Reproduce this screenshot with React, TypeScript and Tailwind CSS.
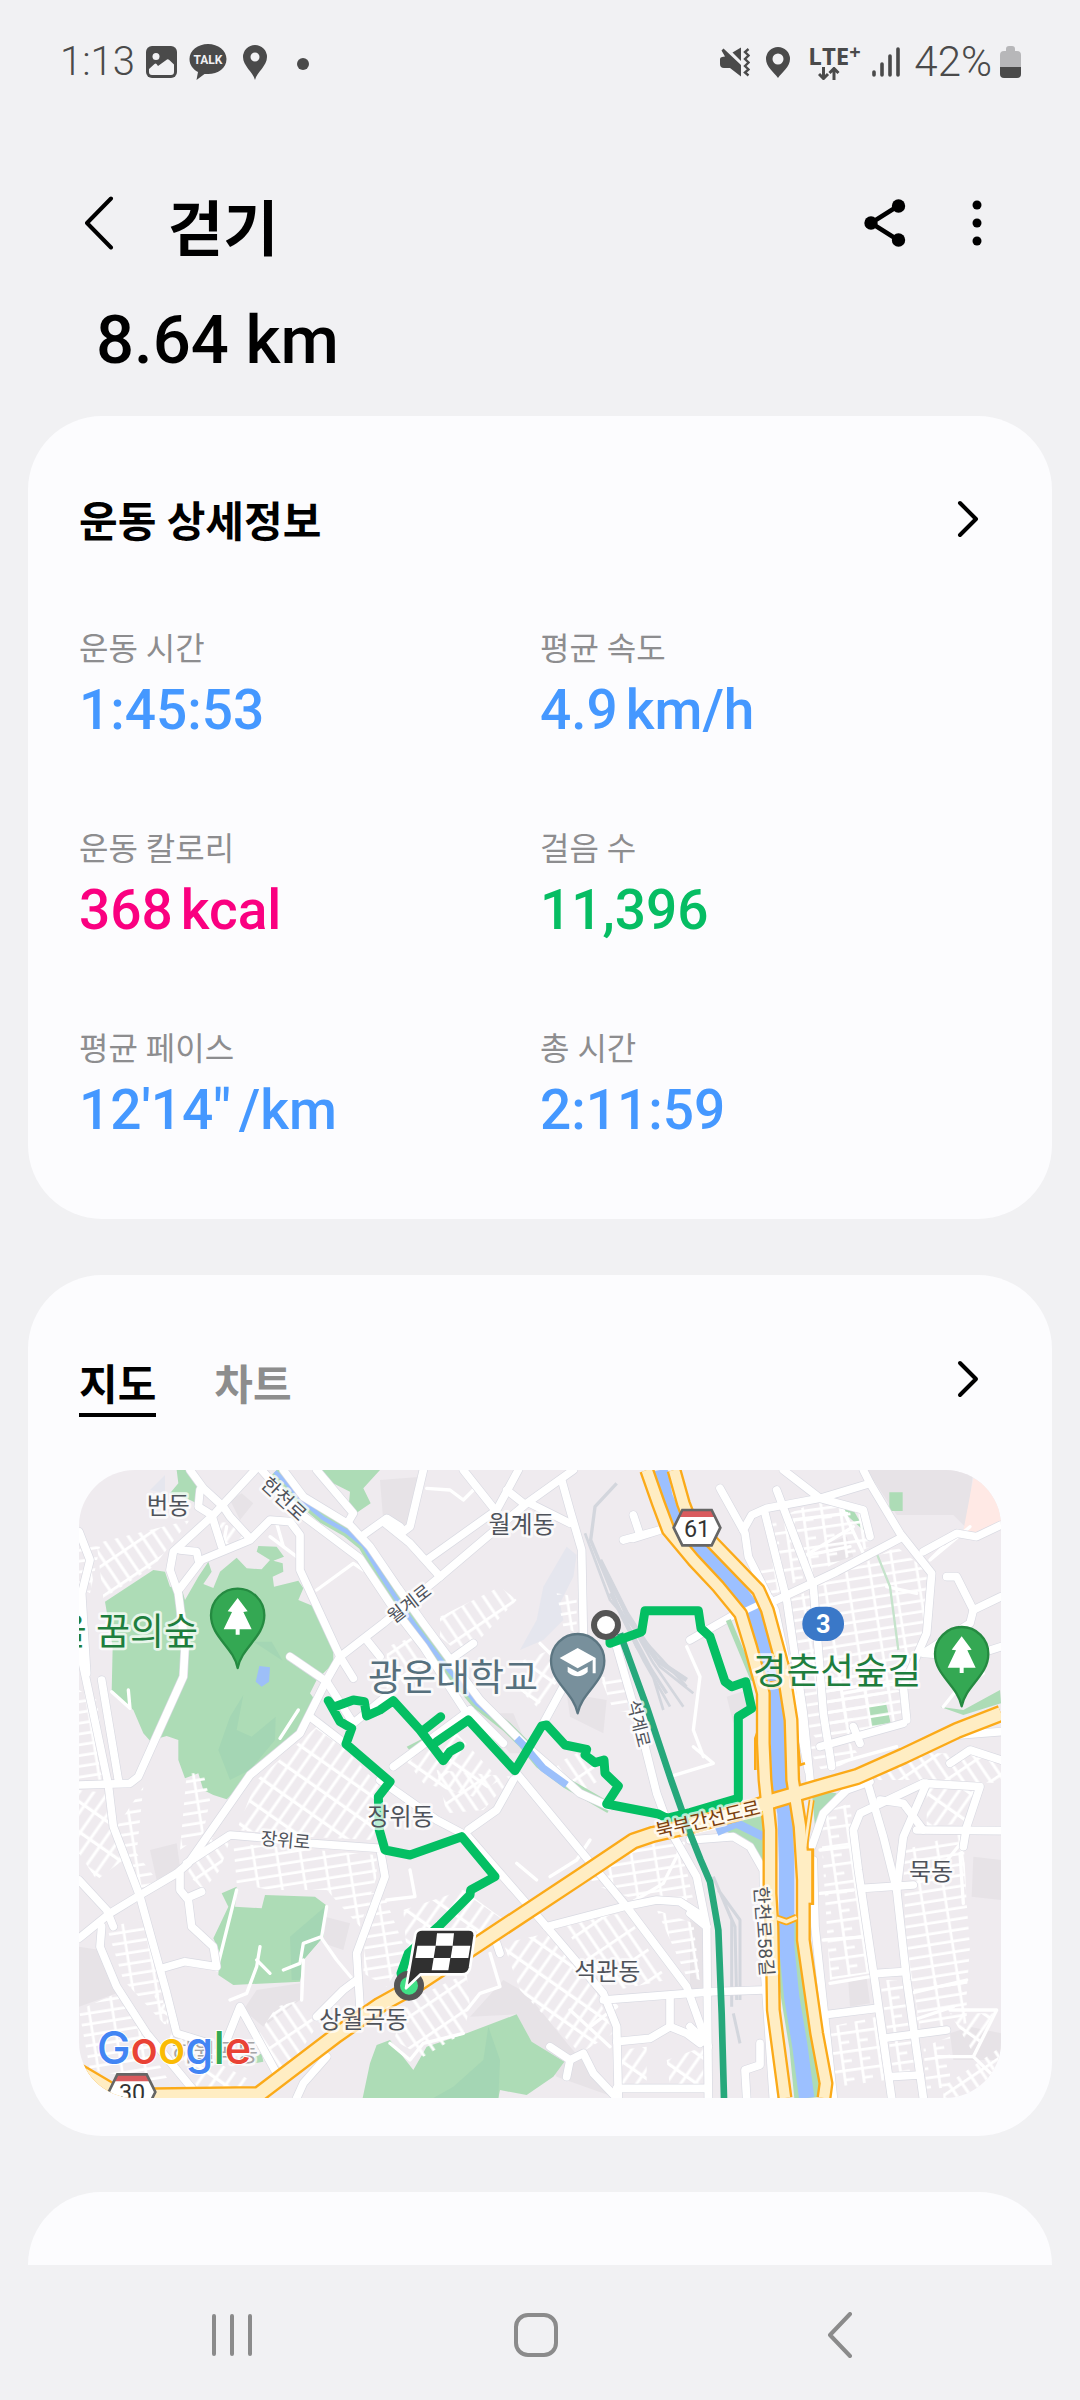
import React, { useState } from "react";

const sans = "font-['Roboto','Noto_Sans_CJK_KR',sans-serif]";

type Metric = { label: string; value: string; unit?: string; tone: string };

const metrics: Metric[] = [
  { label: "운동 시간", value: "1:45:53", tone: "text-[#4598ff]" },
  { label: "평균 속도", value: "4.9", unit: "km/h", tone: "text-[#4598ff]" },
  { label: "운동 칼로리", value: "368", unit: "kcal", tone: "text-[#fa0080]" },
  { label: "걸음 수", value: "11,396", tone: "text-[#06bd63]" },
  { label: "평균 페이스", value: "12'14\"", unit: "/km", tone: "text-[#4598ff]" },
  { label: "총 시간", value: "2:11:59", tone: "text-[#4598ff]" },
];

function StatusBar() {
  return (
    <div className="flex h-[124px] items-center justify-between pl-[60px] pr-[59px] text-[#4a4a4a]">
      <div className="flex items-center">
        <span className="text-[40px] font-light leading-[48px]">1:13</span>
        <svg viewBox="0 0 31 32" className="ml-[11px] h-8 w-[31px]" aria-hidden="true">
          <rect width="31" height="32" rx="6" fill="#4a4a4a" />
          <circle cx="10" cy="10.500" r="3.500" fill="#f1f1f3" />
          <path d="M3 23 L8.500 18 Q9.500 17 10.500 18 L12 20 L21 13.500 Q22 12.800 23 13.800 L28 18.500 V26 Q28 29 25 29 H6 Q3 29 3 26Z" fill="#f1f1f3" />
        </svg>
        <svg viewBox="0 0 38 36" className="ml-3 h-9 w-[38px]" role="img" aria-label="TALK">
          <path d="M19 0 C29 0 37.500 6.500 37.500 15 C37.500 24 29 30 19 30 L15.500 30 L7.500 36 L9 28 C4 25.500 .500 21 .500 15 C.500 6.500 9 0 19 0Z" fill="#4a4a4a" />
          <text x="19" y="20" textAnchor="middle" fontSize="12" fontWeight="700" fill="#f1f1f3">TALK</text>
        </svg>
        <svg viewBox="0 0 24 35" className="ml-4 h-[35px] w-6" aria-hidden="true">
          <path fillRule="evenodd" d="M12 0 A12 12 0 0 1 24 12 C24 21 14 27 12 35 C10 27 0 21 0 12 A12 12 0 0 1 12 0Z M12 7.500 A4.500 4.500 0 1 0 12 16.500 A4.500 4.500 0 1 0 12 7.500Z" fill="#4a4a4a" />
        </svg>
        <span className="ml-[30px] mt-1 size-3 rounded-full bg-[#4a4a4a]" />
      </div>
      <div className="flex items-center">
        <svg viewBox="0 0 30 30" className="h-[30px] w-[30px]" fill="#4a4a4a" aria-hidden="true">
          <path d="M0 12 Q0 10.500 2 10 L5 9.500 L1.500 3.500 L3.500 1.500 L21 18 V29.500 L10 21 H4 Q0 21 0 17Z" />
          <path d="M12.500 5.500 L21 .500 V14Z" />
          <path d="M28.500 2 L25 5 L28.500 8.500 L25 12 L28.500 15.500 L25 19 L28.500 22.500 L25 25.500 L28.500 28.500" fill="none" stroke="#4a4a4a" strokeWidth="2.400" />
        </svg>
        <svg viewBox="0 0 24 31" className="ml-4 h-[31px] w-6" aria-hidden="true">
          <path fillRule="evenodd" d="M12 0 A12 12 0 0 1 24 12 C24 20 16 25 12 31 C8 25 0 20 0 12 A12 12 0 0 1 12 0Z M12 6.500 A5.500 5.500 0 1 0 12 17.500 A5.500 5.500 0 1 0 12 6.500Z" fill="#4a4a4a" />
        </svg>
        <div className="ml-[18px] flex w-[56px] flex-col">
          <div className="flex items-start font-['Open_Sans',sans-serif] font-bold leading-[22px]">
            <span className="text-[24px]">LTE</span>
            <span className="text-[20px] leading-[14px]">+</span>
          </div>
          <svg viewBox="0 0 22 13" className="ml-[10px] h-[13px] w-[22px]" fill="none" stroke="#4a4a4a" strokeWidth="3" aria-hidden="true">
            <path d="M5.500 0 V11 M1 7 L5.500 11.500 L10 7 M16 13 V2 M11.500 6 L16 1.500 L20.500 6" />
          </svg>
        </div>
        <svg viewBox="0 0 28 30" className="ml-2 h-[30px] w-7" stroke="#4a4a4a" strokeWidth="3.600" strokeLinecap="round" aria-hidden="true">
          <path d="M2 25 V28 M10 17 V28 M18 9 V28 M26 2 V28" />
        </svg>
        <span className="ml-[14px] text-[42px] font-light leading-[48px]">42%</span>
        <svg viewBox="0 0 21 33" className="ml-2 h-[33px] w-[21px]" aria-hidden="true">
          <path d="M6 3 Q6 0 9 0 H12 Q15 0 15 3 V5 H17 Q21 5 21 9 V21 H0 V9 Q0 5 4 5 H6Z" fill="#b7b7b9" />
          <path d="M0 21 H21 V28 Q21 32 17 32 H4 Q0 32 0 28Z" fill="#4a4a4a" />
        </svg>
      </div>
    </div>
  );
}

function Header() {
  return (
    <header className="flex h-[156px] items-center pl-[84px] pr-[90px] pb-2 pt-[50px]">
      <button type="button" aria-label="뒤로" className="flex">
        <svg viewBox="0 0 30 54" className="h-[54px] w-[30px]" fill="none" stroke="#000" strokeWidth="4" strokeLinecap="round" strokeLinejoin="round">
          <path d="M27 2.500 L3 27 L27 51.500" />
        </svg>
      </button>
      <h1 className="ml-[54px] mt-4 text-[60px] font-bold leading-[72px]">걷기</h1>
      <button type="button" aria-label="공유" className="ml-auto flex">
        <svg viewBox="0 0 42 48" className="h-12 w-[42px]">
          <path d="M34 7 L7 24 L34 41" fill="none" stroke="#000" strokeWidth="4.500" />
          <circle cx="34.500" cy="7" r="6.700" />
          <circle cx="7" cy="24" r="6.700" />
          <circle cx="34.500" cy="41" r="6.700" />
        </svg>
      </button>
      <button type="button" aria-label="더보기" className="ml-[58px] flex w-[26px] justify-center">
        <svg viewBox="0 0 10 48" className="h-12 w-[10px]">
          <circle cx="5" cy="6" r="4.500" />
          <circle cx="5" cy="24" r="4.500" />
          <circle cx="5" cy="42" r="4.500" />
        </svg>
      </button>
    </header>
  );
}

function Chevron({ label }: { label: string }) {
  return (
    <button type="button" aria-label={label} className="mb-1 flex px-[22px]">
      <svg viewBox="0 0 22 38" className="h-[38px] w-[22px]" fill="none" stroke="#000" strokeWidth="4" strokeLinecap="round" strokeLinejoin="round">
        <path d="M3 3 L19 19 L3 35" />
      </svg>
    </button>
  );
}

const parkGreen = "#addcb6";
const deepGreen = "#a4d6b4";

const majorRoads = [
  "555,30 430,165 310,275 300,330 325,400 345,560 340,650 205,950 180,970 27,975",
  "360,30 400,85 460,140 480,170 540,235",
  "390,90 385,140 425,165 455,260",
  "330,385 395,300 540,240 600,180 660,185 690,225 690,330 810,590 770,660 690,820 540,945 355,1210 320,1240 210,1305 120,1360 27,1435",
  "330,270 380,275 385,300",
  "640,30 700,110 840,195 900,260 985,385 1060,490 1230,720 1360,850 1440,920 1530,1000 1620,1040",
  "575,30 690,160 870,295 960,430 1060,560 1190,760 1340,940 1670,1340 1850,1580 1900,1720 1915,1760",
  "810,590 940,490 1110,350 1370,130 1510,30",
  "1070,300 1280,150 1345,30",
  "1110,350 1020,250 940,185",
  "1180,30 1275,150",
  "1060,30 1020,200 1000,215",
  "1310,90 1360,130",
  "740,30 850,160 835,185",
  "880,225 950,175 990,200",
  "1475,60 1500,150 1535,270 1540,520",
  "1380,130 1500,190",
  "1660,240 1770,210 1690,235",
  "1690,165 1710,225",
  "1640,560 1720,840 1760,1000 1800,1110 1880,1250 1910,1400 1915,1914",
  "1480,680 1420,790",
  "1300,850 1200,750",
  "970,920 1200,750",
  "1140,600 1210,550",
  "660,590 770,665 850,790 960,700",
  "720,770 850,870",
  "810,590 850,655",
  "890,540 930,590",
  "27,560 70,760 115,975 130,1100 210,1310 290,1600 320,1720 400,1745",
  "95,660 145,960",
  "27,215 60,300 35,400 50,640",
  "27,1260 110,1350 130,1400",
  "95,1400 90,1460 140,1580 230,1720 370,1890",
  "350,1210 480,1125 600,1135 720,1150 930,1165 945,1250 860,1480 870,1640",
  "330,1240 330,1290 355,1320 365,1400 430,1460 440,1520 345,1505 275,1525",
  "360,1310 395,1295",
  "470,1740 510,1640 620,1840",
  "860,1560 820,1590 740,1670",
  "770,1790 700,1870 680,1914",
  "930,960 1100,1080 1195,1130 1430,1400 1600,1600 1640,1700 1645,1914",
  "1195,1110 1280,1050 1330,960",
  "1430,1400 1660,1340 1760,1320 1830,1325 1900,1370",
  "1600,1620 1860,1600 1930,1595 2080,1590",
  "1640,1745 1740,1735 1800,1700 1850,1720 1890,1750",
  "1800,1610 1800,1700",
  "1440,1760 1500,1800 1540,1780 1570,1840 1640,1914",
  "1500,1800 1490,1850",
  "1640,1885 1910,1885",
  "1280,1450 1290,1480",
  "1950,85 2025,220 2035,290 2115,450 2200,850 2215,930",
  "2085,160 2150,420 2200,760 2220,960",
  "2120,90 2230,380 2260,760 2285,920",
  "2020,210 2045,165 2090,145 2250,115 2400,70",
  "2140,30 2250,115 2380,150 2400,230",
  "2380,30 2400,70 2490,220 2585,340 2570,520 2500,680 2510,780",
  "1860,540 2000,460 2120,420 2300,335 2490,235",
  "2560,275 2660,220 2720,230 2793,195",
  "2630,350 2660,350 2710,450 2793,410",
  "2710,450 2700,490 2560,580 2700,590 2793,560",
  "2250,860 2500,790",
  "2350,800 2370,850",
  "2225,1160 2260,1060 2330,990 2400,965",
  "2560,970 2370,1060 2350,1110 2365,1230 2420,1600 2465,1914",
  "2390,960 2440,1130 2480,1290 2510,1560 2560,1914",
  "2480,1290 2500,1130 2570,970",
  "2540,1110 2793,1112",
  "2380,1285 2530,1275",
  "2260,1665 2420,1645",
  "2440,1735 2630,1710",
  "2425,1540 2500,1535",
  "2560,970 2730,980 2690,1100 2680,1160",
  "2460,1850 2550,1845",
  "2430,1020 2500,1030 2560,1110",
  "1860,1140 1990,1130 2040,1160 2080,1230 2085,1550 2110,1914",
  "1860,1360 1910,1400",
  "1860,1700 1910,1750",
  "2030,1914 2025,1830 2070,1815 2070,1750",
  "2230,1200 2235,1400 2290,1914",
  "2600,830 2793,815",
  "2640,910 2700,870 2793,900",
];

const minorRoads = [
  "740,390 850,310 880,330", "630,835 685,750", "470,200 455,280", "600,230 680,290", "620,190 640,260",
  "1070,85 1140,90 1180,120 1210,90", "1410,550 1500,640", "1850,560 1890,650 1870,810 1900,890",
  "2450,380 2540,400", "2350,200 2200,290", "2310,130 2380,280", "2170,180 2330,160", "2190,290 2340,260",
  "125,695 180,745 175,690", "500,1290 440,1530", "770,1340 755,1430 700,1450 690,1510 640,1530",
  "755,1435 800,1500 850,1560", "700,1500 695,1620", "570,1460 560,1520 530,1600 480,1620", "560,1500 600,1540",
  "1260,1480 1290,1580 1230,1600 1190,1650", "1020,1230 1035,1310 950,1320", "960,1750 1020,1800 1060,1750 1180,1720",
  "1340,1210 1400,1260", "1440,1250 1520,1200 1560,1140", "1840,1150 1780,1270 1680,1330",
  "1870,860 1930,910 1800,950", "2640,1650 2780,1650 2710,1790 2600,1790", "2710,1790 2793,1870",
  "2250,1170 2340,1160", "2250,1300 2350,1290", "2260,1440 2390,1430", "2280,1570 2400,1550",
  "2520,1600 2690,1560", "2530,1680 2650,1640", "2600,1240 2680,1140", "2670,1180 2680,1330",
  "2700,200 2580,300 2620,260", "1540,1540 1640,1640 1560,1700", "1500,1650 1620,1760", "1480,560 1510,640",
  "1990,1090 1860,1120", "2300,910 2480,860", "2320,700 2480,670", "2620,740 2660,690 2740,640",
];

const blocks: [string, string][] = [
  ["80,250 360,180 250,320 100,415", "a"],
  ["27,250 90,260 60,400 27,380", "b"],
  ["430,185 500,190 530,230 450,260", "c"],
  ["27,690 80,720 115,960 27,960", "b"],
  ["350,940 400,940 420,1020 400,1120 330,1170", "b"],
  ["560,960 740,800 820,860 930,980 910,1140 700,1130 500,1110", "c"],
  ["420,1130 480,1140 450,1230 400,1290 350,1240", "a"],
  ["490,1150 920,1185 920,1250 870,1400 770,1290 600,1290 500,1270", "b"],
  ["140,1100 220,980 200,1180 260,1260 210,1290", "b"],
  ["27,990 120,1000 160,1200 80,1260 27,1180", "c"],
  ["110,1400 220,1380 270,1560 290,1700 160,1560", "b"],
  ["27,1650 140,1600 220,1730 300,1870 60,1830", "b"],
  ["240,1580 290,1620 300,1740 390,1780 540,1860 500,1890 380,1880", "c"],
  ["620,1640 690,1620 740,1700 680,1790 620,1830 560,1730", "a"],
  ["890,1300 940,1300 1010,1480 950,1580 880,1540", "b"],
  ["1000,1350 1180,1290 1330,1400 1100,1560 1010,1480", "c"],
  ["1020,1620 1190,1540 1200,1640 1180,1720 1060,1790 970,1740", "a"],
  ["1300,1450 1430,1420 1580,1600 1630,1720 1530,1780 1350,1590", "c"],
  ["1470,1380 1670,1360 1790,1560 1640,1590 1560,1520", "a"],
  ["1620,1160 1830,1140 1870,1320 1700,1320 1560,1270", "b"],
  ["1760,1350 1870,1390 1890,1560 1850,1550", "b"],
  ["1650,1770 1730,1760 1730,1880 1650,1880", "c"],
  ["1790,1800 1900,1760 1900,1870 1800,1880", "c"],
  ["1110,470 1290,380 1340,420 1180,590 1110,530", "a"],
  ["950,560 1030,530 1110,640 950,690", "a"],
  ["1000,890 1160,820 1290,960 1210,1010 1060,970", "c"],
  ["1100,930 1330,950 1240,1050 1130,1060", "a"],
  ["1480,900 1560,860 1590,960 1540,990 1450,930", "a"],
  ["1590,650 1660,650 1690,760 1630,750", "b"],
  ["1460,400 1520,410 1520,520 1480,500", "b"],
  ["1360,600 1470,560 1500,620 1400,740 1350,690", "c"],
  ["2060,330 2130,300 2150,380 2090,420", "b"],
  ["2090,190 2250,120 2390,160 2400,260 2170,370 2130,380", "d"],
  ["2160,420 2480,260 2580,340 2560,560 2500,660 2250,850 2210,800", "b"],
  ["2240,660 2390,640 2500,700 2490,790 2260,850", "b"],
  ["2210,860 2340,850 2370,890 2260,940", "b"],
  ["2380,960 2560,880 2690,880 2793,900 2793,970 2570,960", "a"],
  ["2570,980 2720,980 2680,1090 2570,1100", "c"],
  ["2250,1060 2340,1030 2400,1540 2280,1560", "d"],
  ["2500,1170 2680,1120 2690,1330 2700,1460 2690,1600 2510,1560", "b"],
  ["2530,1580 2690,1540 2690,1690 2550,1710", "b"],
  ["2280,1700 2420,1670 2450,1860 2300,1880", "d"],
  ["2430,1560 2500,1560 2550,1840 2470,1840", "d"],
  ["2560,1760 2640,1730 2640,1880 2570,1890", "d"],
  ["2620,1880 2793,1760 2793,1914 2620,1914", "a"],
  ["2640,1660 2770,1660 2710,1780", "c"],
];

function Pin({ x, y, fill, edge, children }: { x: number; y: number; fill: string; edge: string; children: React.ReactNode }) {
  return (
    <g transform={`translate(${x} ${y})`}>
      <path d="M0 158 C-12 95 -80 66 -80 0 A80 80 0 0 1 80 0 C80 66 12 95 0 158Z" fill={fill} stroke={edge} strokeWidth="7" strokeLinejoin="round" />
      {children}
    </g>
  );
}

const tree = "M0 -52 L30 -12 L17 -10 L42 42 L6 42 L6 58 L-6 58 L-6 42 L-42 42 L-17 -10 L-30 -12Z";

function Shield({ x, y, value }: { x: number; y: number; value: string }) {
  return (
    <g transform={`translate(${x} ${y})`}>
      <path d="M-70 0 L-44 -53 L44 -53 L70 0 L44 53 L-44 53Z" fill="#fff" />
      <path d="M-54 -32 L-44 -53 L44 -53 L54 -32Z" fill="#d95b5e" />
      <path d="M-70 0 L-44 -53 L44 -53 L70 0 L44 53 L-44 53Z" fill="none" stroke="#666" strokeWidth="8" />
      <text y="28" textAnchor="middle" fontSize="70" fill="#333">{value}</text>
    </g>
  );
}

type Place = { t: string; x: number; y: number; s: number; c: string; r?: number };
const places: Place[] = [
  { t: "번동", x: 295, y: 163, s: 70, c: "#4f535b" },
  { t: "월계동", x: 1355, y: 218, s: 72, c: "#4f535b" },
  { t: "장위동", x: 992, y: 1094, s: 72, c: "#4f535b" },
  { t: "석관동", x: 1612, y: 1560, s: 72, c: "#4f535b" },
  { t: "묵동", x: 2583, y: 1260, s: 72, c: "#4f535b" },
  { t: "상월곡동", x: 880, y: 1705, s: 72, c: "#4f535b" },
  { t: "한천로", x: 628, y: 132, s: 58, c: "#4f535b", r: 43 },
  { t: "월계로", x: 1030, y: 446, s: 54, c: "#4f535b", r: -38 },
  { t: "석계로", x: 1688, y: 795, s: 52, c: "#4f535b", r: 76 },
  { t: "장위로", x: 645, y: 1160, s: 54, c: "#4f535b", r: 5 },
  { t: "한천로58길", x: 2062, y: 1415, s: 56, c: "#4f535b", r: 86 },
  { t: "북부간선도로", x: 1918, y: 1098, s: 58, c: "#7b400d", r: -13 },
  { t: "광운대학교", x: 1149, y: 692, s: 111, c: "#56707d" },
  { t: "경춘선숲길", x: 2301, y: 672, s: 110, c: "#1e7e3e" },
];

const bukbu = "2793,760 2660,812 2500,888 2360,950 2270,975 2110,1022 1990,1062 1850,1100 1750,1123 1690,1143 1530,1250 1220,1455 1030,1580 930,1635 800,1725 565,1904 250,1908 120,1890 27,1835";
const westway = "1730,30 1765,130 1795,210 1870,300 1945,380 2012,462 2042,560 2080,700 2080,850 2085,960 2100,1110 2100,1300 2106,1400 2110,1650 2145,1914";
const eastway = "1812,30 1840,130 1865,195 1925,245 2065,390 2092,450 2138,620 2163,780 2168,960 2190,1100 2200,1260 2200,1440 2240,1720 2268,1870 2262,1914";
const stream = "615,35 650,70 700,125 760,175 830,215 880,255 930,340 975,410 1030,490 1120,610 1220,730 1310,800 1360,850 1410,910 1490,970 1620,1045";

function RouteMap() {
  return (
    <svg viewBox="27 30 2766 1884" role="img" aria-label="걷기 경로 지도" className="block w-full rounded-[56px] bg-[#efebef]">
      <defs>
        <pattern id="a" width="34" height="78" patternUnits="userSpaceOnUse" patternTransform="rotate(-34)">
          <path d="M0 4 H34 M17 0 V78" stroke="#fff" strokeWidth="9" />
        </pattern>
        <pattern id="b" width="70" height="32" patternUnits="userSpaceOnUse" patternTransform="rotate(-9)">
          <path d="M0 16 H70 M8 0 V32" stroke="#fff" strokeWidth="8" />
        </pattern>
        <pattern id="c" width="36" height="74" patternUnits="userSpaceOnUse" patternTransform="rotate(35)">
          <path d="M0 10 H36 M18 0 V74" stroke="#fff" strokeWidth="9" />
        </pattern>
        <pattern id="d" width="56" height="56" patternUnits="userSpaceOnUse" patternTransform="rotate(-8)">
          <path d="M0 10 H56 M28 0 V56 M28 38 H56" stroke="#fff" strokeWidth="8" />
        </pattern>
      </defs>

      <g fill="#e7e3e7">
        <path d="M2230 30 L2710 30 L2690 205 L2650 165 L2480 165 L2390 30Z" />
        <path d="M930 60 L1055 50 L1020 200 L940 185Z" />
        <path d="M480 120 L515 100 L550 130 L510 180Z" />
        <path d="M27 1460 L90 1470 L140 1600 L27 1640Z" />
        <path d="M240 1170 L320 1150 L330 1220 L260 1260Z" />
        <path d="M560 1590 L690 1570 L690 1620 L580 1700 L520 1650Z" />
        <path d="M765 1370 L840 1390 L820 1470 L760 1450Z" />
        <path d="M1200 1670 L1300 1560 L1370 1600 L1500 1760 L1640 1914 L1460 1850 L1385 1745 L1340 1663Z" />
        <path d="M1490 700 L1610 720 L1600 820 L1500 770Z" />
        <path d="M1220 760 L1330 760 L1380 880 L1320 880Z" />
        <path d="M2270 250 L2330 230 L2350 290 L2280 310Z" />
        <path d="M2710 1190 L2793 1200 L2793 1320 L2705 1310Z" />
        <path d="M2335 1565 L2390 1555 L2400 1630 L2340 1640Z" />
        <path d="M2640 1720 L2700 1700 L2793 1720 L2793 1800 L2650 1800Z" />
        <path d="M1860 1380 L1900 1400 L1905 1590 L1860 1590Z" />
        <path d="M1970 710 L2030 690 L2040 740 L1990 790Z" />
      </g>
      <path d="M1490 260 L1520 285 L1510 350 L1470 430 L1480 480 L1420 540 L1350 570 L1400 480 L1420 380Z M240 90 L285 45 L285 100Z" fill="#e5e6ee" />
      <path d="M2710 55 L2793 80 L2793 190 L2720 220 L2680 212Z" fill="#ffe9e5" />

      <g fill={parkGreen}>
        <path d="M105 425 L250 330 L285 335 L300 380 L335 385 L345 420 L385 350 L415 305 L425 335 L400 372 L430 384 L450 335 L500 293 L530 325 L575 328 L600 300 L560 275 L565 258 L620 260 L642 290 L610 302 L638 310 L640 335 L608 350 L612 380 L685 362 L700 385 L685 420 L745 445 L770 500 L790 570 L790 610 L740 660 L720 700 L735 720 L700 810 L640 870 L540 940 L490 1000 L470 1018 L430 1005 L400 990 L385 940 L345 955 L325 900 L325 840 L290 828 L240 842 L220 820 L190 750 L125 695 L128 560Z" />
        <path d="M320 30 L355 30 L388 70 L380 130 L360 120 L300 100 L325 70Z" />
        <path d="M745 30 L930 30 L880 85 L902 130 L858 160 L835 150 L840 95 L770 60Z" />
        <path d="M455 1300 L500 1280 L495 1340 L575 1345 L585 1305 L735 1310 L768 1335 L760 1430 L700 1500 L690 1565 L490 1575 L445 1545 L450 1480 L430 1435 L475 1340Z" />
        <path d="M878 1914 L900 1810 L920 1755 L960 1740 L1030 1830 L1070 1760 L1190 1720 L1340 1663 L1385 1745 L1483 1805 L1450 1850 L1370 1905 L1290 1890 L1285 1914Z" />
        <path d="M2458 97 h40 v56 h-40Z" />
        <path d="M2290 118 L2350 150 L2390 220 L2330 165Z" />
        <path d="M2392 742 L2447 725 L2462 790 L2402 802Z" />
        <path d="M2610 740 L2680 750 L2790 690 L2793 730 L2680 765Z" />
        <path d="M1010 860 L1060 835 L1075 850 L1030 885Z" />
        <path d="M2225 990 L2300 1000 L2235 1100Z" />
        <path d="M1940 1100 L2090 1060 L2090 1220 L2040 1150Z" />
        <path d="M555 1790 L575 1780 L580 1805 L555 1810Z" />
      </g>
      <g fill={deepGreen}>
        <path d="M520 705 L480 770 L445 870 L480 960 L540 930 L615 840 L617 770 L545 830 L500 810Z" />
        <path d="M550 545 L605 545 L638 602Z" />
        <path d="M765 1340 L660 1430 L665 1560 L690 1560 L700 1500 L760 1430Z" />
        <path d="M1255 1700 L1240 1800 L1150 1880 L1090 1914 L1285 1914 L1290 1800Z" />
      </g>
      <path d="M568 618 L600 622 L597 665 L575 680 L557 665Z" fill="#9dbff8" />

      <g fill="none" stroke="#d3d6dd" strokeWidth="8" strokeLinejoin="round">
        <path d="M1640 70 L1575 140 L1562 240 L1640 430 L1700 560 L1790 700" strokeWidth="10" />
        <path d="M1545 220 L1620 420 L1740 560 L1850 680" />
        <path d="M1590 300 L1670 460 L1760 600 L1850 660" strokeWidth="14" />
        <path d="M1640 430 L1740 620 L1780 750 M1660 450 L1750 610 L1840 740 M1690 500 L1770 620 L1870 700 M1620 400 L1720 600 L1800 740" />
        <path d="M1930 1250 L1985 1380 L1985 1640 M1945 1290 L2010 1380 L2010 1620 M1960 1320 L1995 1400 L2000 1620 M1990 1660 L2010 1750" strokeWidth="9" />
      </g>

      {blocks.map(([points, id]) => (
        <polygon key={points} points={points} fill={`url(#${id})`} />
      ))}
      <g fill="none" stroke="#fff" strokeWidth="10" strokeLinejoin="round" strokeLinecap="round">
        {minorRoads.map((p) => <polyline key={p} points={p} />)}
      </g>
      <path d="M2420 280 L2460 380 L2485 570" fill="none" stroke="#c5e3cb" strokeWidth="7" />

      <polyline points={stream} fill="none" stroke={parkGreen} strokeWidth="32" />
      <polyline points={stream} fill="none" stroke="#9cc0fb" strokeWidth="13" />

      <g fill="none" stroke="#d9dae2" strokeWidth="27" strokeLinejoin="round" strokeLinecap="round">
        {majorRoads.map((p) => <polyline key={p} points={p} />)}
      </g>
      <g fill="none" stroke="#fff" strokeWidth="23" strokeLinejoin="round" strokeLinecap="round">
        {majorRoads.map((p) => <polyline key={p} points={p} />)}
      </g>
      <path d="M1340 835 L1365 860 L1420 925 L1490 975" fill="none" stroke="#9cc0fb" strokeWidth="22" />

      <path d="M2150 1380 L2155 1480 L2175 1610 L2200 1760 L2215 1914" fill="none" stroke={parkGreen} strokeWidth="84" />
      <path d="M1975 480 L2050 660" stroke={parkGreen} strokeWidth="16" />
      <path d="M1940 1115 L2000 1090 L2080 1130" fill="none" stroke="#9cc0fb" strokeWidth="26" />
      <polyline points="1770,30 1785,110 1820,190 1890,265 1975,350 2035,430 2068,500 2100,620 2122,730 2125,850 2128,970 2145,1060 2150,1210 2150,1460 2165,1610 2190,1760 2210,1914" fill="none" stroke="#9cc0ff" strokeWidth="46" strokeLinejoin="round" />
      <path d="M1990 470 L2110 412" stroke="#fff" strokeWidth="18" />

      <g fill="none" strokeLinejoin="round">
        <g stroke="#fbaa19" strokeWidth="45">
          <path d="M2063 815 L2056 835 L2056 930" strokeWidth="8" />
          <path d="M2210 1165 V1335" />
          <path d="M2100 675 L2140 670 M2120 1375 L2150 1385 L2180 1372" strokeWidth="22" />
          <path d="M2225 1020 L2205 1160" strokeWidth="18" />
          <path d="M2180 820 L2190 915 L2205 910" strokeWidth="8" />
          <polyline points={westway} />
          <polyline points={eastway} />
          <polyline points={bukbu} strokeWidth="52" />
        </g>
        <g stroke="#ffedc3" strokeWidth="31">
          <path d="M2208 1172 V1328" />
          <path d="M2225 1020 L2205 1160" strokeWidth="8" />
          <path d="M2100 675 L2140 670 M2120 1375 L2150 1385 L2180 1372" strokeWidth="11" />
          <polyline points={westway} />
          <polyline points={eastway} />
          <polyline points={bukbu} strokeWidth="38" />
        </g>
      </g>

      <polyline points="1650,520 1730,740 1805,965 1860,1120 1892,1200 1920,1265 1945,1410 1955,1660 1962,1914" fill="none" stroke="#26a87b" strokeWidth="20" strokeLinejoin="round" />

      <g fill="none" stroke="#04bf63" strokeWidth="27" strokeLinejoin="round" strokeLinecap="round">
        <path d="M1620 530 L1620 550 L1715 515 L1725 452 L1885 452 L1893 505 L1920 530 L1965 665 L1985 680 L2027 665 L2045 745 L2005 770 L2005 1015 L1860 1058 L1790 1075 L1765 1062 L1610 1032 L1645 978 L1605 940 L1602 900 L1575 908 L1545 885 L1550 868 L1485 855 L1430 795 L1415 798 L1335 932 L1195 780 L1100 845" />
        <path d="M1055 815 L1112 770 M1170 858 L1140 875 L1120 902 L1050 810 L970 722 L930 750 L890 768 L883 725 L850 720 L790 742 L775 722 L810 785 L845 805 L828 852 L960 965 L925 1010 L928 1110 L945 1170 L1020 1185 L1175 1130 L1275 1250 L1202 1290 L1200 1305 L1110 1395 L1015 1480 L993 1540 L1000 1570" />
      </g>

      <Pin x={503} y={466} fill="#34a853" edge="#258a41"><path d={tree} fill="#fff" /></Pin>
      <Pin x={2675} y={581} fill="#34a853" edge="#258a41"><path d={tree} fill="#fff" /></Pin>
      <Pin x={1523} y={602} fill="#78909c" edge="#5c7682">
        <path d="M0 -38 L54 -8 V38 H45 V-2 L0 23 L-54 -8Z" fill="#fff" />
        <path d="M-30 18 L0 34 L30 18 V34 Q0 60 -30 34Z" fill="#fff" />
      </Pin>

      <Shield x={1881} y={203} value="61" />
      <Shield x={186} y={1896} value="30" />
      <rect x="2197" y="440" width="125" height="103" rx="50" fill="#3a78c8" />
      <text x="2260" y="518" textAnchor="middle" fontSize="76" fontWeight="700" fill="#fff">3</text>

      <g stroke="#fff" strokeOpacity="0.72" strokeWidth="16" strokeLinejoin="round" className="[paint-order:stroke]">
        {places.map((p) => (
          <text key={p.t} x={p.x} y={p.y} fontSize={p.s} fill={p.c} textAnchor="middle" transform={p.r ? `rotate(${p.r} ${p.x} ${p.y})` : undefined}>
            {p.t}
          </text>
        ))}
        <text x="384" y="556" fontSize="111" fill="#1e7e3e" textAnchor="end">북서울 꿈의숲</text>
        <text x="435" y="1804" fontSize="70" fill="#a5a5a8" textAnchor="middle">하월곡동</text>
      </g>

      <text x="80" y="1813" fontSize="136" fontWeight="500" stroke="#fff" strokeWidth="6" className="font-['Inter',sans-serif] [paint-order:stroke]">
        <tspan fill="#4285f4">G</tspan>
        <tspan fill="#e94235">o</tspan>
        <tspan fill="#fabb05">o</tspan>
        <tspan fill="#4285f4">g</tspan>
        <tspan fill="#34a853">l</tspan>
        <tspan fill="#e94235">e</tspan>
      </text>

      <circle cx="1608" cy="495" r="36" fill="#fff" stroke="#555" strokeWidth="18" />
      <circle cx="1017" cy="1577" r="36" fill="#40e086" stroke="#555" strokeWidth="18" />
      <path d="M1036 1422 Q1040 1408 1056 1408 H1196 Q1216 1408 1214 1428 L1200 1524 Q1196 1543 1176 1543 H1052 L1008 1585Z" fill="#303030" stroke="#fff" strokeWidth="8" strokeLinejoin="round" />
      <path d="M1101 1420 h51 l-4 37 h-51Z M1042 1457 h55 l-6 37 h-55Z M1148 1457 h53 l-6 37 h-53Z M1091 1494 h50 l-6 37 h-50Z" fill="#fff" />
    </svg>
  );
}

export default function App() {
  const [tab, setTab] = useState("map");
  const tabClass = (active: boolean) =>
    active
      ? "border-b-4 border-black pt-1 text-black"
      : "border-b-4 border-transparent pt-1 text-[#8d8d8d]";
  return (
    <div className={`flex min-h-screen flex-col bg-[#f1f1f3] text-black ${sans}`}>
      <StatusBar />
      <Header />
      <main className="flex flex-1 flex-col px-7">
        <p className="pb-7 pl-[68px] pt-3 text-[67px] font-medium leading-[96px]">8.64 km</p>

        <section className="rounded-[74px] bg-[#fcfcfe] px-[51px] pb-[74px] pt-[73px]">
          <div className="flex items-center justify-between">
            <h2 className="pt-1 text-[42px] font-bold leading-[60px]">운동 상세정보</h2>
            <Chevron label="운동 상세정보 열기" />
          </div>
          <dl className="mt-[70px] grid grid-cols-2 gap-y-[78px]">
            {metrics.map((m) => (
              <div key={m.label}>
                <dt className="text-[32px] leading-[52px] text-[#8d8d8f]">{m.label}</dt>
                <dd className={`flex items-baseline gap-2 text-[55px] font-medium leading-[70px] ${m.tone}`}>
                  <span>{m.value}</span>
                  {m.unit && <span>{m.unit}</span>}
                </dd>
              </div>
            ))}
          </dl>
        </section>

        <section className="mt-14 rounded-[74px] bg-[#fcfcfe] px-[51px] pb-[38px] pt-[76px]">
          <div className="flex items-start justify-between pb-[53px]">
            <div role="tablist" className="flex gap-[58px] text-[42px] font-bold leading-[62px]">
              <button type="button" role="tab" aria-selected={tab === "map"} onClick={() => setTab("map")} className={tabClass(tab === "map")}>
                <span className="-mb-1 block">지도</span>
              </button>
              <button type="button" role="tab" aria-selected={tab === "chart"} onClick={() => setTab("chart")} className={tabClass(tab === "chart")}>
                <span className="-mb-1 block">차트</span>
              </button>
            </div>
            <div className="pt-[9px]">
              <Chevron label="지도 열기" />
            </div>
          </div>
          <RouteMap />
        </section>

        <section aria-label="다음 카드" className="mt-14 min-h-[73px] flex-1 rounded-t-[74px] bg-[#fcfcfe]" />
      </main>

      <nav className="grid h-[135px] grid-cols-3 items-center pl-20 pr-[88px] pt-1">
        <button type="button" aria-label="최근 앱" className="flex justify-center">
          <svg viewBox="0 0 42 44" className="h-11 w-[42px]" stroke="#8b8b8b" strokeWidth="4" strokeLinecap="round">
            <path d="M3 3 V41 M21 3 V41 M39 3 V41" />
          </svg>
        </button>
        <button type="button" aria-label="홈" className="flex justify-center">
          <svg viewBox="0 0 46 46" className="size-[46px]" fill="none" stroke="#8b8b8b" strokeWidth="4">
            <rect x="3" y="3" width="40" height="40" rx="12" />
          </svg>
        </button>
        <button type="button" aria-label="이전" className="flex justify-center">
          <svg viewBox="0 0 26 46" className="h-[46px] w-[26px]" fill="none" stroke="#8b8b8b" strokeWidth="4" strokeLinecap="round" strokeLinejoin="round">
            <path d="M23 2 L3 23 L23 44" />
          </svg>
        </button>
      </nav>
    </div>
  );
}
